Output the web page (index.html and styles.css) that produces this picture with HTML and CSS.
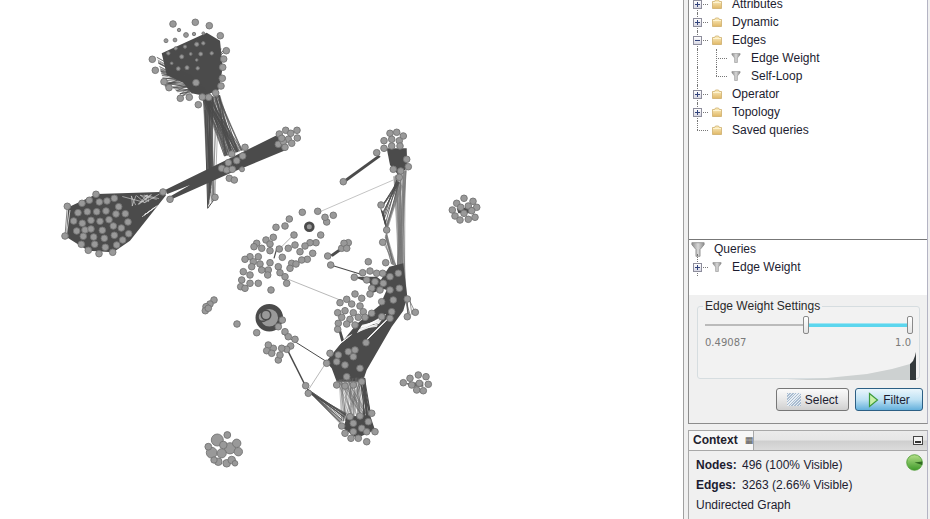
FILE: index.html
```html
<!DOCTYPE html>
<html lang="en">
<head>
    <meta charset="UTF-8">
    <title>Filters</title>
    <link rel="stylesheet" href="styles.css">
</head>
<body>
    <svg class="defs" width="0" height="0">
        <defs>
            <linearGradient id="folderFill" x1="0" y1="0" x2="0" y2="1">
                <stop offset="0" stop-color="#fdf0c4"/>
                <stop offset="1" stop-color="#e0b766"/>
            </linearGradient>
            <linearGradient id="funnelFill" x1="0" y1="0" x2="1" y2="0">
                <stop offset="0" stop-color="#8c8c8c"/>
                <stop offset=".5" stop-color="#d8d8d8"/>
                <stop offset="1" stop-color="#8c8c8c"/>
            </linearGradient>
            <linearGradient id="pieFill" x1="0" y1="0" x2="0" y2="1">
                <stop offset="0" stop-color="#b5e08a"/>
                <stop offset="1" stop-color="#3f9a2a"/>
            </linearGradient>
            <symbol id="folder" viewBox="0 0 10 10">
                <path d="M.5 2.5h2l1-1.5h3l1 1.5h2v7h-9z" fill="url(#folderFill)" stroke="#c9a860" stroke-width=".7"/>
                <path d="M1 3.5h8" stroke="#fff8dc" stroke-width=".8"/>
            </symbol>
            <symbol id="funnel" viewBox="0 0 10 11">
                <path d="M.5 .5h9v1.5l-3 3.5v5h-3v-5l-3-3.500z" fill="url(#funnelFill)" stroke="#8a8a8a" stroke-width=".6"/>
            </symbol>
        </defs>
    </svg>

    <main class="canvas">
        <svg id="graph" class="graph" width="683" height="519" viewBox="0 0 683 519"></svg>
    </main>

    <aside class="side">
        <section class="filters">
            <div class="tree-pane">
                <ul class="tree tree-clipped">
                    <li class="row">
                        <span class="cell line expander"><i class="box plus"></i></span>
                        <svg class="icon"><use href="#folder"/></svg>Attributes
                    </li>
                    <li class="row">
                        <span class="cell line expander"><i class="box plus"></i></span>
                        <svg class="icon"><use href="#folder"/></svg>Dynamic
                    </li>
                    <li class="row">
                        <span class="cell line expander"><i class="box minus"></i></span>
                        <svg class="icon"><use href="#folder"/></svg>Edges
                    </li>
                    <li class="row">
                        <span class="cell line"></span>
                        <span class="cell line twig"></span>
                        <svg class="icon"><use href="#funnel"/></svg>Edge Weight
                    </li>
                    <li class="row">
                        <span class="cell line"></span>
                        <span class="cell line twig end"></span>
                        <svg class="icon"><use href="#funnel"/></svg>Self-Loop
                    </li>
                    <li class="row">
                        <span class="cell line expander"><i class="box plus"></i></span>
                        <svg class="icon"><use href="#folder"/></svg>Operator
                    </li>
                    <li class="row">
                        <span class="cell line expander"><i class="box plus"></i></span>
                        <svg class="icon"><use href="#folder"/></svg>Topology
                    </li>
                    <li class="row">
                        <span class="cell line twig end"></span>
                        <svg class="icon"><use href="#folder"/></svg>Saved queries
                    </li>
                </ul>
            </div>

            <div class="query-pane">
                <div class="query-root">
                    <svg class="icon-large"><use href="#funnel"/></svg>Queries
                </div>
                <div class="row">
                    <span class="cell line expander first-query"><i class="box plus"></i></span>
                    <svg class="icon"><use href="#funnel"/></svg>Edge Weight
                </div>
            </div>

            <div class="settings">
                <fieldset class="settings-box">
                    <legend>Edge Weight Settings</legend>
                    <div class="slider">
                        <div class="track-off"></div>
                        <i class="thumb"></i>
                        <div class="track-on"></div>
                        <i class="thumb"></i>
                    </div>
                    <div class="bounds"><span>0.49087</span><span>1.0</span></div>
                    <svg class="histogram" width="200" height="28" viewBox="0 0 200 28">
                        <path d="M0 28H70L110 26L150 22L175 17L193 12V28z" fill="#cdd1d1"/>
                        <path d="M193 12L196 9L198 4L199 0V28H193z" fill="#343a3c"/>
                    </svg>
                </fieldset>
                <div class="actions">
                    <button class="btn"><i class="hatch"></i>Select</button>
                    <button class="btn btn-on">
                        <svg class="play" width="11" height="16" viewBox="0 0 11 16"><path d="M1.500 1.500L9.500 8L1.500 14.500z" fill="#c8f0a8" stroke="#3c9a3c" stroke-width="1.200"/></svg>Filter
                    </button>
                </div>
            </div>
        </section>

        <section class="context">
            <header class="context-head">
                <div class="tab">Context<span class="tab-close">&#9638;</span></div>
                <div class="head-rest"><i class="minimize"></i></div>
            </header>
            <div class="context-body">
                <svg class="pie" width="17" height="17" viewBox="0 0 17 17">
                    <circle cx="8.500" cy="8.500" r="7.800" fill="url(#pieFill)" stroke="#4a9a30" stroke-width=".8"/>
                    <path d="M8.500 8.500L16.300 7.500L16.300 11z" fill="#2f6a20"/>
                </svg>
                <p class="stat"><b>Nodes:</b><span>496 (100% Visible)</span></p>
                <p class="stat"><b>Edges:</b><span>3263 (2.66% Visible)</span></p>
                <p class="stat">Undirected Graph</p>
            </div>
        </section>
    </aside>

    <script src="graph.js"></script>
</body>
</html>
```

FILE: styles.css
```css
html, body {
    margin: 0;
    padding: 0;
    height: 519px;
    overflow: hidden;
}

body {
    display: flex;
    font-family: 'Liberation Sans', Arial, sans-serif;
    font-size: 12px;
    color: #1c1c30;
    background-color: #f0f0f0;
}

.defs {
    position: absolute;
}

.canvas {
    width: 683px;
    height: 519px;
    background-color: white;
    border-right: 1px solid #a0a0a0;
    flex: none;
}

.graph {
    display: block;
}

.side {
    width: 240px;
    margin-left: 4px;
    flex: none;
}

.filters {
    height: 424px;
    box-sizing: border-box;
    border-left: 1px solid #8c8c8c;
    border-right: 1px solid #b4b4c4;
    border-bottom: 1px solid #8c8c8c;
    display: flex;
    flex-direction: column;
}

/* tree */
.tree-pane {
    height: 239px;
    flex: none;
    overflow: hidden;
    background-color: white;
    border-bottom: 1px solid #777;
}

.tree {
    list-style: none;
    margin: 0;
    padding: 0;
}

.tree-clipped {
    margin-top: -5px;
}

.row {
    display: flex;
    align-items: center;
    height: 18px;
    white-space: nowrap;
}

.cell {
    position: relative;
    width: 19px;
    height: 18px;
    flex: none;
}

.row > .cell + .cell + .icon,
.row > .cell + .icon {
    margin-left: 4px;
}

.expander + .icon,
.twig + .icon {
    margin-left: 4px;
}

.line::before {
    content: "";
    position: absolute;
    left: 8px;
    top: 0;
    bottom: 0;
    border-left: 1px dotted #777;
}

.expander::after,
.twig::after {
    content: "";
    position: absolute;
    left: 8px;
    right: 0;
    top: 9px;
    border-top: 1px dotted #777;
}

.end::before {
    bottom: 9px;
}

.first-query::before {
    top: -4px;
}

.box {
    position: absolute;
    z-index: 1;
    left: 4px;
    top: 5px;
    width: 7px;
    height: 7px;
    border: 1px solid #8d8d9c;
    background: linear-gradient(#ffffff, #d8d8e4);
}

.plus::before,
.minus::before {
    content: "";
    position: absolute;
    left: 1px;
    top: 3px;
    width: 5px;
    height: 1px;
    background-color: #33447c;
}

.plus::after {
    content: "";
    position: absolute;
    left: 3px;
    top: 1px;
    width: 1px;
    height: 5px;
    background-color: #33447c;
}

.icon {
    width: 10px;
    height: 10px;
    margin-right: 10px;
    flex: none;
}

/* queries */
.query-pane {
    height: 55px;
    flex: none;
    background-color: white;
}

.query-root {
    display: flex;
    align-items: center;
    height: 18px;
    padding-left: 2px;
}

.icon-large {
    width: 14px;
    height: 15px;
    margin-right: 9px;
}

/* settings */
.settings {
    flex: 1;
    padding: 4px 4px 0 8px;
}

.settings-box {
    height: 80px;
    box-sizing: border-box;
    margin: 0;
    padding: 0 2px 0 7px;
    width: 223px;
    border: 1px solid #d6dde0;
    border-radius: 3px;
    background-color: #f2f2f2;
}

.settings-box legend {
    padding: 0 2px;
    margin-left: -2px;
    line-height: 14px;
    color: #2a2a2a;
}

.slider {
    display: flex;
    align-items: center;
    height: 18px;
    width: 208px;
    margin-top: 3px;
}

.track-off {
    width: 98px;
    height: 2px;
    background-color: #bbb;
}

.track-on {
    flex: 1;
    height: 4px;
    background-color: #5cd6ee;
    border-top: 1px solid #9fe4f2;
    box-sizing: border-box;
}

.thumb {
    width: 4px;
    height: 16px;
    border: 1px solid #8a8a8a;
    border-radius: 2px;
    background: linear-gradient(#ffffff, #e4e4e4);
    flex: none;
}

.bounds {
    display: flex;
    justify-content: space-between;
    width: 206px;
    margin-top: 2px;
    font-family: 'DejaVu Sans', sans-serif;
    font-size: 10px;
    line-height: 14px;
    color: #7a7a7a;
}

.histogram {
    display: block;
    margin: 2px 0 0 12px;
}

.actions {
    display: flex;
    justify-content: flex-end;
    gap: 6px;
    margin-top: 9px;
    padding-right: 0;
}

.btn {
    display: flex;
    align-items: center;
    justify-content: center;
    height: 23px;
    width: 73px;
    padding: 0;
    font: inherit;
    color: #1c1c30;
    border: 1px solid #777;
    border-radius: 3px;
    background: linear-gradient(#fafafa, #e8e8e8 50%, #cfcfcf);
}

.btn-on {
    width: 68px;
    border-color: #2c5f84;
    background: linear-gradient(#eaf6fc, #bfe2f4 50%, #64b0dc);
}

.hatch {
    width: 14px;
    height: 13px;
    margin-right: 4px;
    background: repeating-linear-gradient(135deg, #a9bcd0 0 1px, #e8eef4 1px 2px);
}

.play {
    margin-right: 4px;
}

/* context */
.context {
    height: 89px;
    margin-top: 6px;
    box-sizing: border-box;
    border-left: 1px solid #a8a8a8;
    border-right: 1px solid #b4b4c4;
    border-top: 1px solid #a8a8a8;
}

.context-head {
    display: flex;
    height: 19px;
    border-bottom: 1px solid #a8a8a8;
}

.tab {
    width: 65px;
    box-sizing: border-box;
    padding-left: 4px;
    font-weight: bold;
    line-height: 19px;
    background-color: #f7f7f7;
    border-right: 1px solid #a8a8a8;
    display: flex;
    align-items: center;
    color: #22222e;
}

.tab-close {
    margin-left: 7px;
    font-size: 9px;
    font-weight: normal;
    font-family: 'DejaVu Sans', sans-serif;
    color: #555;
}

.head-rest {
    flex: 1;
    display: flex;
    justify-content: flex-end;
    align-items: center;
    padding-right: 4px;
    background: linear-gradient(#ebebeb, #e6e6e6 45%, #cfcfcf 55%, #dcdcdc);
}

.minimize {
    position: relative;
    width: 8px;
    height: 7px;
    border: 1px solid #444;
    background-color: #f4f4f4;
}

.minimize::after {
    content: "";
    position: absolute;
    left: 1px;
    right: 1px;
    bottom: 1px;
    height: 2px;
    background-color: #333;
}

.context-body {
    position: relative;
    padding: 4px 7px;
}

.stat {
    display: flex;
    margin: 0;
    height: 20px;
    line-height: 20px;
}

.stat b {
    width: 46px;
}

.pie {
    position: absolute;
    right: 4px;
    top: 3px;
}
```

FILE: graph.js
```js
// Graph drawing: positions read off the layout, fan edges spread with a small seeded generator.
var DARK = '#4b4b4b';
var seed = 7;
function rnd() {
    seed = (seed * 16807) % 2147483647;
    return (seed % 10000) / 10000;
}

var out = [];

function mass(ox, oy, pts, color) {
    var p = pts.map(function (q) {
        return (ox + q[0] / 3).toFixed(1) + ',' + (oy + q[1] / 3).toFixed(1);
    }).join(' ');
    out.push('<polygon points="' + p + '" fill="' + (color || DARK) + '"/>');
}

function line(ox, oy, a, b, w, color) {
    out.push('<line x1="' + (ox + a[0] / 3).toFixed(1) + '" y1="' + (oy + a[1] / 3).toFixed(1) +
        '" x2="' + (ox + b[0] / 3).toFixed(1) + '" y2="' + (oy + b[1] / 3).toFixed(1) +
        '" stroke="' + (color || DARK) + '" stroke-width="' + (w || 0.5) + '"/>');
}

// n edges between two segments
function fan(ox, oy, a1, a2, b1, b2, n, w, color) {
    for (var i = 0; i < n; i++) {
        var s = rnd(), t = rnd();
        line(ox, oy,
            [a1[0] + (a2[0] - a1[0]) * s, a1[1] + (a2[1] - a1[1]) * s],
            [b1[0] + (b2[0] - b1[0]) * t, b1[1] + (b2[1] - b1[1]) * t], w, color);
    }
}

function nodes(ox, oy, list, r) {
    list.forEach(function (n) {
        var rad = n[2] ? n[2] / 3 : (r || 3.7);
        out.push('<circle cx="' + (ox + n[0] / 3).toFixed(1) + '" cy="' + (oy + n[1] / 3).toFixed(1) +
            '" r="' + rad.toFixed(1) + '" fill="#999" stroke="#747474" stroke-width="' + (n[3] || 0.9) + '"' +
            (n[4] ? ' style="stroke:' + n[4] + '"' : '') + '/>');
    });
}

/* ---- upper left part (read at x = 50 + zx/3, y = 10 + zy/3) ---- */
var A = [50, 10];

// fan going down from the top cluster
fan(A[0], A[1], [455, 265], [510, 255], [470, 590], [500, 560], 14, 0.5, '#666');
fan(A[0], A[1], [455, 265], [510, 255], [520, 440], [580, 420], 60, 0.6);
fan(A[0], A[1], [460, 270], [490, 260], [475, 590], [490, 480], 26, 0.5);
line(A[0], A[1], [465, 300], [473, 595], 1);
line(A[0], A[1], [473, 595], [495, 565], 1);

// top cluster
mass(A[0], A[1], [[470, 68], [510, 92], [518, 170], [508, 238], [465, 258], [425, 250], [400, 218], [350, 195], [335, 130]]);
fan(A[0], A[1], [320, 140], [345, 230], [420, 190], [470, 250], 40, 0.5);
fan(A[0], A[1], [350, 215], [400, 262], [440, 210], [470, 240], 24, 0.5);
fan(A[0], A[1], [500, 110], [530, 125], [470, 150], [490, 190], 10, 0.6);

// long bundle and left cluster
mass(A[0], A[1], [[680, 376], [708, 420], [540, 490], [365, 568], [356, 562], [420, 525], [352, 552], [345, 540]]);
mass(A[0], A[1], [[140, 552], [330, 546], [348, 556], [325, 585], [240, 692], [190, 727], [115, 722], [48, 680], [55, 592]]);
fan(A[0], A[1], [210, 560], [330, 552], [240, 590], [330, 565], 14, 0.6, '#ddd');
fan(A[0], A[1], [250, 640], [330, 580], [265, 625], [340, 575], 5, 0.7, '#eee');
line(A[0], A[1], [52, 590], [45, 678], 0.7);
line(A[0], A[1], [60, 600], [50, 670], 0.7, '#fff');

nodes(A[0], A[1], [
    [408, 75, 7.2], [440, 103, 6.4], [348, 92, 6], [375, 90, 5.6], [395, 140, 6], [411, 173, 6], [385, 176, 5.6],
    [443, 175, 5.2], [452, 132, 5.6], [485, 130, 5], [460, 100, 5], [432, 72, 5], [355, 130, 5], [377, 115, 4.8],
    [405, 110, 4.8], [422, 132, 4.2], [387, 60, 5], [460, 70, 4.2], [440, 150, 4], [365, 160, 4]
]);
nodes(A[0], A[1], [
    [369, 42], [436, 37], [478, 47], [511, 77], [529, 122], [521, 147], [518, 172], [517, 205], [513, 228], [497, 249],
    [476, 262], [457, 261], [445, 284], [418, 262], [391, 265], [357, 233], [342, 215], [316, 181], [307, 148], [438, 218],

    [138, 553], [118, 571], [96, 580], [52, 589], [148, 576], [171, 573], [193, 565], [206, 590], [84, 608], [112, 605],
    [140, 605], [168, 603], [198, 612], [226, 611], [71, 633], [97, 640], [123, 631], [150, 634], [177, 629], [234, 636],
    [80, 663], [105, 660], [123, 657], [157, 661], [190, 648], [214, 654], [45, 678], [100, 679], [131, 681], [163, 685],
    [193, 676], [236, 671], [218, 690], [94, 703], [134, 703], [166, 712], [200, 705], [115, 721], [147, 731], [188, 727],

    [545, 432], [585, 412], [578, 438], [535, 458], [560, 452], [515, 475], [530, 480], [547, 478], [538, 505], [553, 510],
    [495, 562], [339, 546], [360, 568],
    [688, 372], [707, 361], [722, 370], [741, 361], [715, 388], [742, 384], [685, 403], [700, 395], [705, 412], [725, 400], [695, 385]
], 3.3);
nodes(A[0], A[1], [[576, 478, 7.4]]);

/* ---- middle and right part (x = 190 + zx/3, y = 120 + zy/3) ---- */
var B = [190, 120];

// thin links
line(B[0], B[1], [610, 180], [390, 275], 0.5, '#888');
line(B[0], B[1], [295, 478], [450, 540], 0.6, '#888');
line(B[0], B[1], [275, 640], [410, 725], 1);
line(B[0], B[1], [295, 695], [345, 795], 1.500);
line(B[0], B[1], [355, 810], [410, 725], 0.6, '#888');
line(B[0], B[1], [262, 380], [252, 415], 1.200);
line(B[0], B[1], [305, 350], [260, 395], 0.6, '#777');

// top right cluster and its links
mass(B[0], B[1], [[590, 85], [650, 85], [652, 145], [625, 165], [600, 135]]);
mass(B[0], B[1], [[565, 105], [572, 110], [465, 188], [458, 182]]);
fan(B[0], B[1], [610, 170], [650, 150], [620, 440], [650, 530], 36, 0.45, '#777');
fan(B[0], B[1], [620, 180], [630, 190], [572, 255], [590, 330], 12, 0.8);
fan(B[0], B[1], [572, 265], [580, 280], [590, 330], [590, 320], 6, 1);
fan(B[0], B[1], [590, 335], [580, 370], [600, 430], [620, 440], 12, 0.5, '#666');
fan(B[0], B[1], [628, 185], [640, 200], [585, 320], [595, 330], 10, 0.4, '#777');

// lower right bundle
mass(B[0], B[1], [[598, 440], [640, 430], [652, 530], [640, 572], [605, 620], [530, 750], [518, 785], [440, 785], [425, 745], [408, 725], [500, 612], [570, 555], [590, 510], [560, 500], [585, 460]]);
mass(B[0], B[1], [[445, 630], [452, 628], [468, 680], [458, 680]]);
fan(B[0], B[1], [500, 640], [520, 610], [560, 620], [590, 580], 16, 0.7, '#fff');
fan(B[0], B[1], [520, 670], [540, 650], [570, 620], [600, 590], 10, 0.7, '#eee');
fan(B[0], B[1], [430, 690], [470, 650], [450, 670], [490, 640], 6, 0.6, '#fff');
fan(B[0], B[1], [640, 520], [660, 540], [650, 590], [680, 578], 6, 0.6);
fan(B[0], B[1], [440, 780], [525, 770], [455, 905], [540, 885], 50, 0.45, '#666');
fan(B[0], B[1], [505, 770], [525, 775], [520, 890], [545, 885], 10, 1);
fan(B[0], B[1], [350, 805], [360, 820], [450, 910], [470, 880], 22, 0.6);
mass(B[0], B[1], [[470, 890], [540, 885], [555, 930], [500, 955], [460, 925]]);

// lines in the right hand side
mass(B[0], B[1], [[420, 405], [455, 380], [462, 386], [428, 410]]);
line(B[0], B[1], [422, 435], [510, 462], 1.200);
mass(B[0], B[1], [[490, 470], [540, 490], [545, 520], [600, 500], [560, 470]]);
mass(B[0], B[1], [[800, 265], [850, 262], [845, 280], [805, 280]]);
mass(B[0], B[1], [[648, 790], [700, 785], [700, 800], [660, 800]], '#666');

// circled hubs
nodes(B[0], B[1], [
    [358, 320, 11.600, 2.800, DARK],
    [238, 593, 34, 5, DARK]
]);
nodes(B[0], B[1], [
    [218, 590, 14, 1.600, DARK],
    [228, 585, 14, 1.600, DARK]
]);

nodes(B[0], B[1], [
    // top right
    [600, 40], [620, 37], [640, 48], [582, 62], [605, 58], [628, 62], [582, 85], [605, 78], [630, 78], [560, 98],
    [650, 118], [655, 140], [632, 153], [610, 148], [628, 172], [460, 185],
    [573, 255], [590, 330], [578, 367], [587, 428], [535, 425],
    // right isolated
    [822, 235], [800, 250], [849, 244], [787, 270], [812, 262], [835, 258], [860, 262], [795, 288], [822, 280], [845, 272],
    [810, 300], [835, 298], [855, 292],
    // trail round the hub
    [337, 277], [383, 274], [430, 286], [410, 306], [405, 292], [298, 297], [285, 318], [258, 322], [312, 345], [392, 345],
    [378, 368], [360, 368], [345, 378], [315, 375], [330, 395], [368, 400], [352, 418], [335, 420], [295, 385], [277, 412],
    [268, 387], [250, 352], [228, 360], [240, 372], [200, 370], [192, 380], [215, 385], [240, 392], [205, 410], [180, 410],
    [165, 418], [190, 425], [210, 432], [240, 428], [265, 440], [305, 430], [318, 432], [300, 445], [270, 458], [235, 450],
    [215, 450], [185, 440], [160, 455], [180, 465], [155, 480], [152, 500], [180, 490], [205, 490], [165, 505], [285, 470],
    [290, 490], [233, 465],
    // inside and under the big ring
    [243, 510], [141, 612], [200, 638], [277, 600], [265, 620], [285, 635], [295, 650], [315, 658], [302, 678], [290, 688],
    [275, 685], [250, 685], [235, 675], [230, 692], [245, 700], [265, 720], [270, 705],
    // small left group
    [72, 540], [60, 552], [48, 560], [46, 572], [55, 565],
    // cluster by the bundle
    [495, 522], [470, 538], [515, 535], [450, 548], [485, 552], [510, 558], [443, 578], [465, 572], [490, 578], [520, 575],
    [455, 592], [480, 598], [505, 592], [525, 592], [470, 612], [495, 615], [445, 610],
    // right cluster nodes
    [518, 458], [540, 453], [560, 460], [578, 460], [493, 472], [530, 480], [555, 485], [580, 490], [600, 470], [625, 460],
    [545, 505], [570, 510], [600, 510], [628, 505], [540, 522], [575, 545], [610, 540], [652, 537], [676, 577], [652, 590],
    [545, 580], [575, 590], [605, 575], [600, 595], [443, 628],
    // middle knot
    [420, 700], [445, 705], [475, 695], [495, 690], [490, 710], [410, 730], [440, 725], [465, 735], [510, 745], [528, 668],
    [440, 795], [465, 798], [490, 795], [515, 785], [470, 770], [347, 797], [355, 820],
    // lower cluster
    [510, 888], [480, 890], [545, 880], [535, 905], [455, 918], [490, 910], [515, 925], [465, 940], [490, 935], [555, 935],
    [530, 935], [483, 955], [505, 955], [530, 965],
    // small right group
    [640, 788], [660, 775], [685, 765], [708, 770], [665, 795], [688, 790], [715, 793], [680, 810], [700, 812],
    [455, 385], [475, 368], [462, 370], [470, 385], [413, 408], [422, 435]
], 3.300);

// bottom left group of larger nodes
nodes(B[0], B[1], [
    [112, 945, 3.400], [82, 960, 6], [120, 985, 5.600], [65, 998, 5.400], [95, 1000, 4.600], [145, 995, 4.200], [140, 970, 4.200],
    [55, 980, 3.400], [110, 1030, 3.800], [85, 1025, 3.800], [125, 1020, 3.800], [72, 1020, 3.200], [135, 1030, 2.800],
    [100, 975, 3.800]
].map(function (n) { return [n[0], n[1], n[2] * 3]; }));

document.getElementById('graph').innerHTML = out.join('');
```
